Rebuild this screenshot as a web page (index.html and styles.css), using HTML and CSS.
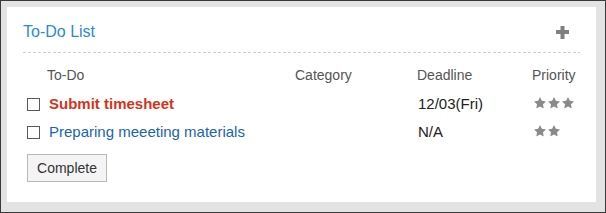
FILE: index.html
```html
<!DOCTYPE html>
<html>
<head>
<meta charset="utf-8">
<link rel="stylesheet" href="styles.css">
</head>
<body>
<svg width="0" height="0" class="defs" aria-hidden="true">
  <defs>
    <symbol id="star" viewBox="2 1.5 20 19">
      <path d="M12 1.5l3.09 6.26 6.91 1-5 4.87 1.18 6.88L12 17.27l-6.18 3.24L7 13.63 2 8.76l6.91-1z"/>
    </symbol>
  </defs>
</svg>
<div class="panel">
  <div class="panel-head">
    <h1 class="title">To-Do List</h1>
    <svg class="plus" width="13" height="13" viewBox="0 0 13 13"><rect x="0" y="4" width="13" height="4"/><rect x="4.5" y="0" width="4" height="13"/></svg>
  </div>
  <div class="list">
    <div class="row head">
      <span></span>
      <span class="h-todo">To-Do</span>
      <span>Category</span>
      <span>Deadline</span>
      <span>Priority</span>
    </div>
    <div class="row">
      <span class="check"></span>
      <span class="todo urgent">Submit timesheet</span>
      <span></span>
      <span class="date">12/03(Fri)</span>
      <span class="stars"><svg class="star"><use href="#star"/></svg><svg class="star"><use href="#star"/></svg><svg class="star"><use href="#star"/></svg></span>
    </div>
    <div class="row">
      <span class="check"></span>
      <span class="todo link">Preparing meeeting materials</span>
      <span></span>
      <span class="date">N/A</span>
      <span class="stars"><svg class="star"><use href="#star"/></svg><svg class="star"><use href="#star"/></svg></span>
    </div>
  </div>
  <button class="btn">Complete</button>
</div>
</body>
</html>
```
FILE: styles.css
```css
html, body {
  margin: 0;
  padding: 0;
}
body {
  width: 606px;
  height: 213px;
  box-sizing: border-box;
  border: 1px solid #3a3a3a;
  background: #e3e3e3;
  padding: 6px 9px 10px 6px;
  font-family: "Liberation Sans", Arial, sans-serif;
}
.defs {
  position: absolute;
}
.panel {
  background: #fff;
  height: 195px;
  box-sizing: border-box;
  padding: 0 16px;
}
.panel-head {
  display: flex;
  align-items: center;
  justify-content: space-between;
  padding: 15px 11px 11px 0;
  background: repeating-linear-gradient(90deg, #cfcfcf 0 3px, transparent 3px 5px) left bottom / 100% 1px no-repeat;
}
.title {
  margin: 0;
  font-size: 16px;
  font-weight: normal;
  line-height: 20px;
  color: #2a8ad6;
}
.plus {
  fill: #808080;
  display: block;
}
.list {
  margin-top: 8px;
  padding-left: 4px;
}
.row {
  display: grid;
  grid-template-columns: 20px 248px 122px 115px 1fr;
  align-items: center;
  height: 28px;
  font-size: 15px;
  color: #222;
}
.row.head {
  font-size: 14px;
  color: #555;
}
.check {
  width: 13px;
  height: 13px;
  box-sizing: border-box;
  border: 1px solid #5a5a5a;
  background: #fff;
  margin-top: 3px;
}
.todo {
  padding-left: 2px;
}
.urgent {
  color: #d8321a;
  font-weight: bold;
}
.link {
  color: #1865b0;
}
.date {
  padding-left: 1px;
}
.stars {
  display: flex;
  gap: 2px;
  padding-left: 2px;
}
.star {
  width: 12px;
  height: 11.5px;
  fill: #8a8a8a;
}
.btn {
  margin-top: 9px;
  margin-left: 4px;
  width: 80px;
  height: 28px;
  padding: 0;
  border: 1px solid #b8b8b8;
  border-radius: 0;
  background: #f4f4f4;
  color: #333;
  font-family: "Liberation Sans", Arial, sans-serif;
  font-size: 14px;
}
```
